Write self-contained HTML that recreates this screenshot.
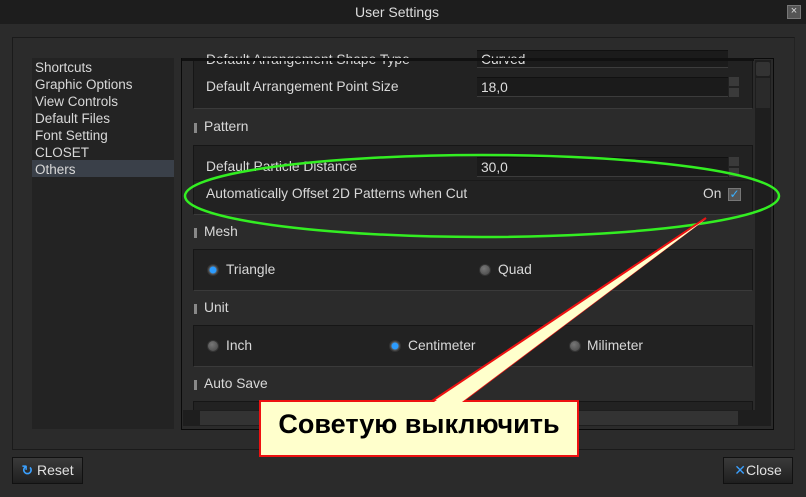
<!DOCTYPE html><html><head><meta charset="utf-8"><style>
*{margin:0;padding:0;box-sizing:border-box}
body{width:806px;height:497px;background:#2b2b2b;font-family:"Liberation Sans","DejaVu Sans",sans-serif;font-size:13.8px;color:#d8d8d8;position:relative;overflow:hidden}
.a{position:absolute}
.t{position:absolute;white-space:nowrap;line-height:16px}
.box{position:absolute;left:193px;width:560px;background:#222;border:1px solid #161616;border-bottom-color:#3a3a3a}
.inp{position:absolute;left:477px;width:251px;height:20px;background:#1b1b1b;border-top:1px solid #111;border-bottom:1px solid #3c3c3c;padding-left:4px;line-height:19px;color:#ddd}
.sp{position:absolute;left:729px;width:10px;height:9px;background:#3a3a3a}
.bar{position:absolute;left:194px;width:3px;height:10px;background:#888}
.r{position:absolute;width:12px;height:12px;border-radius:50%;background:radial-gradient(circle at 40% 35%,#777,#444);border:1px solid #333}
.r.on{background:radial-gradient(circle,#2c9cff 0 3px,#555 4px,#3a3a3a 6px)}
.btn{position:absolute;height:27px;border:1px solid #111;background:linear-gradient(#3a3a3a,#1f1f1f);color:#e0e0e0;font-size:14px;line-height:25px;text-align:center}
</style></head><body>
<div class="a" style="left:0;top:0;width:806px;height:24px;background:#1d1d1d"></div>
<div class="t" style="left:0;width:794px;top:4px;text-align:center;font-size:14px;color:#ddd">User Settings</div>
<div class="a" style="left:787px;top:5px;width:14px;height:14px;background:#555;border:1px solid #777;color:#ddd;font-size:11px;line-height:11px;text-align:center">×</div>
<div class="a" style="left:12px;top:37px;width:783px;height:413px;border:1px solid #1a1a1a;border-right-color:#222"></div>
<div class="a" style="left:32px;top:58px;width:142px;height:371px;background:#232323"></div>
<div class="a" style="left:32px;top:160px;width:142px;height:17px;background:#3a4049"></div>
<div class="t" style="left:35px;top:59px;font-size:13.5px;line-height:17px">Shortcuts<br>Graphic Options<br>View Controls<br>Default Files<br>Font Setting<br>CLOSET<br>Others</div>
<div class="a" style="left:181px;top:58px;width:593px;height:372px;border:1px solid #0a0a0a;background:#2b2b2b;overflow:hidden">
</div>
<div class="box" style="top:58px;height:51px;border-top:none"></div>
<div class="t" style="left:206px;top:52px">Default Arrangement Shape Type</div>
<div class="inp" style="top:50px;height:18px;line-height:17px">Curved</div>
<div class="t" style="left:206px;top:79px">Default Arrangement Point Size</div>
<div class="inp" style="top:77px">18,0</div>
<div class="sp" style="top:77px"></div><div class="sp" style="top:88px"></div>
<div class="a" style="left:182px;top:58px;width:572px;height:3px;background:#111"></div>
<div class="bar" style="top:123px"></div><div class="t" style="left:204px;top:119px">Pattern</div>
<div class="box" style="top:145px;height:70px"></div>
<div class="t" style="left:206px;top:159px">Default Particle Distance</div>
<div class="inp" style="top:157px">30,0</div>
<div class="sp" style="top:157px"></div><div class="sp" style="top:168px"></div>
<div class="a" style="left:194px;top:180px;width:558px;height:1px;background:#1a1a1a"></div>
<div class="t" style="left:206px;top:186px">Automatically Offset 2D Patterns when Cut</div>
<div class="t" style="left:703px;top:186px">On</div>
<div class="a" style="left:728px;top:188px;width:13px;height:13px;background:#555;border:1px solid #777;color:#3ab0ff;font-size:12px;line-height:11px;text-align:center;font-weight:bold">✓</div>
<div class="bar" style="top:228px"></div><div class="t" style="left:204px;top:224px">Mesh</div>
<div class="box" style="top:249px;height:42px"></div>
<div class="r on" style="left:207px;top:264px"></div><div class="t" style="left:226px;top:262px">Triangle</div>
<div class="r" style="left:479px;top:264px"></div><div class="t" style="left:498px;top:262px">Quad</div>
<div class="bar" style="top:304px"></div><div class="t" style="left:204px;top:300px">Unit</div>
<div class="box" style="top:325px;height:42px"></div>
<div class="r" style="left:207px;top:340px"></div><div class="t" style="left:226px;top:338px">Inch</div>
<div class="r on" style="left:389px;top:340px"></div><div class="t" style="left:408px;top:338px">Centimeter</div>
<div class="r" style="left:569px;top:340px"></div><div class="t" style="left:587px;top:338px">Milimeter</div>
<div class="bar" style="top:380px"></div><div class="t" style="left:204px;top:376px">Auto Save</div>
<div class="box" style="top:401px;height:10px;border-bottom:none"></div>
<div class="a" style="left:183px;top:410px;width:572px;height:16px;background:#1e1e1e"></div>
<div class="a" style="left:200px;top:411px;width:538px;height:14px;background:#333"></div>
<div class="a" style="left:755px;top:60px;width:16px;height:366px;background:#1e1e1e"></div>
<div class="a" style="left:756px;top:62px;width:14px;height:14px;background:#333;border-radius:2px"></div>
<div class="a" style="left:756px;top:78px;width:14px;height:30px;background:#2a2a2a"></div>
<div class="btn" style="left:12px;top:457px;width:71px"><span style="color:#3aa0ff;font-weight:bold">↻</span> Reset</div>
<div class="btn" style="left:723px;top:457px;width:70px"><span style="color:#3aa0ff;font-weight:bold">✕</span>Close</div>
<svg class="a" style="left:0;top:0" width="806" height="497">
<ellipse cx="482" cy="196" rx="297" ry="41" fill="none" stroke="#33ee22" stroke-width="2.5"/>
<polygon points="432,401 706,218 463,401" fill="#ffffcc" stroke="#ee1111" stroke-width="2"/>
<rect x="260" y="401" width="318" height="55" fill="#ffffcc" stroke="#ee1111" stroke-width="2"/>
<polygon points="434,402 706,219 462,402" fill="#ffffcc"/>
</svg>
<div class="t" style="left:260px;top:409px;width:318px;text-align:center;font-size:27px;line-height:30px;font-weight:bold;color:#000">Советую выключить</div>
</body></html>
